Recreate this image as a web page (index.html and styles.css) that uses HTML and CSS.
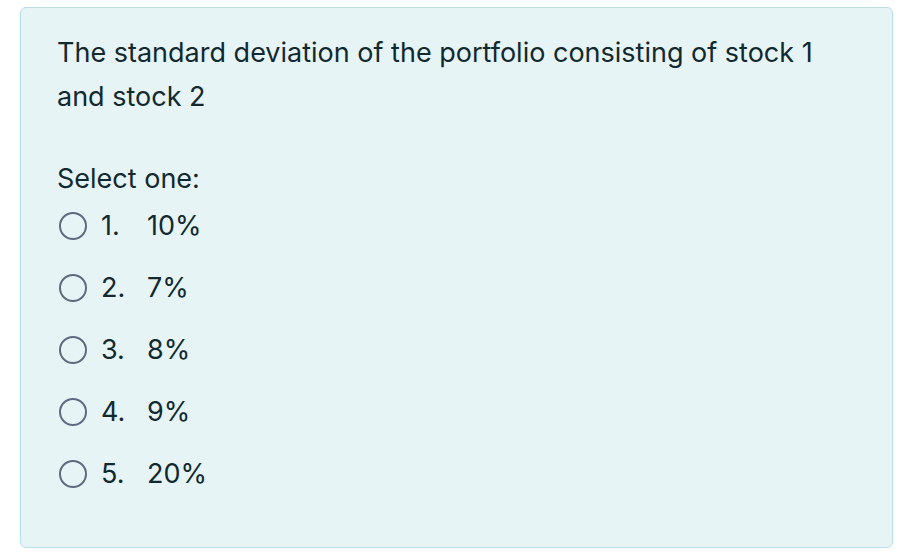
FILE: index.html
```html
<!DOCTYPE html>
<html lang="en">
<head>
<meta charset="utf-8">
<title>Question</title>
<link rel="stylesheet" href="styles.css">
</head>
<body>
<div class="formulation">
  <div class="qtext">The standard deviation of the portfolio consisting of stock 1 and stock 2</div>
  <div class="prompt">Select one:</div>
  <div class="answers">
    <label class="r"><span class="radio"></span><span class="num">1.</span><span class="txt">10%</span></label>
    <label class="r"><span class="radio"></span><span class="num">2.</span><span class="txt">7%</span></label>
    <label class="r"><span class="radio"></span><span class="num">3.</span><span class="txt">8%</span></label>
    <label class="r"><span class="radio"></span><span class="num">4.</span><span class="txt">9%</span></label>
    <label class="r"><span class="radio"></span><span class="num">5.</span><span class="txt">20%</span></label>
  </div>
</div>
</body>
</html>
```
FILE: styles.css
```css
* { box-sizing: border-box; }
html, body { margin: 0; padding: 0; background: #ffffff; }
body {
  font-family: Inter, "Noto Sans", sans-serif;
  font-size: 27px;
  line-height: 44px;
  color: #12292f;
  padding: 7px 21px 6px 20px;
}
.formulation {
  height: 541px;
  background: #e7f4f6;
  border: 1px solid #b8dfe6;
  border-radius: 6px;
  padding: 23px 36px 0 36px;
}
.qtext { max-width: 785px; }
.prompt { margin-top: 38px; }
.answers {
  margin-top: 3px;
  display: flex;
  flex-direction: column;
  gap: 18px;
}
.r {
  display: flex;
  align-items: center;
  height: 44px;
}
.radio {
  width: 28px;
  height: 28px;
  border: 2.5px solid #5f6a7f;
  border-radius: 50%;
  margin-left: 2px;
  margin-right: 14px;
  flex: none;
}
.num { display: inline-block; width: 46px; }
```
